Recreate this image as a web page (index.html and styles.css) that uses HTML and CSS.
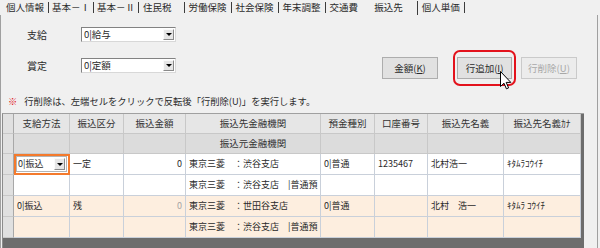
FILE: index.html
```html
<!DOCTYPE html>
<html lang="ja">
<head>
<meta charset="utf-8">
<title>振込先</title>
<link rel="stylesheet" href="styles.css">
</head>
<body>
<div class="tabs">
  <span class="tab">個人情報</span>
  <span class="tab tab-roman">基本－Ⅰ</span>
  <span class="tab tab-roman">基本－Ⅱ</span>
  <span class="tab tab-wide">住民税</span>
  <span class="tab">労働保険</span>
  <span class="tab">社会保険</span>
  <span class="tab">年末調整</span>
  <span class="tab tab-plain">交通費</span>
  <span class="tab tab-active">振込先</span>
  <span class="tab">個人単価</span>
</div>
<div class="panel">
  <div class="top">
    <div class="fields">
      <span class="label">支給</span>
      <div class="select"><span class="select-text">0|給与</span><span class="select-btn"><i class="tri"></i></span></div>
      <span class="label">賞定</span>
      <div class="select"><span class="select-text">0|定額</span><span class="select-btn"><i class="tri"></i></span></div>
    </div>
    <div class="actions">
      <button class="btn">金額(<u>K</u>)</button>
      <span class="btn-wrap">
        <button class="btn">行追加(<u>I</u>)</button>
        <span class="ring"></span>
        <svg class="cursor" width="12" height="19" viewBox="0 0 12 19"><path d="M0.5 0.5 V15.5 L4 12.2 L6.4 17.8 L8.6 16.9 L6.2 11.4 H10.8 Z" fill="#fff" stroke="#000" stroke-width="1" stroke-linejoin="round"/></svg>
      </span>
      <button class="btn btn-disabled">行削除(<u>U</u>)</button>
    </div>
  </div>
  <div class="note"><span class="mark">※</span>行削除は、左端セルをクリックで反転後「行削除(U)」を実行します。</div>
  <div class="grid">
    <div class="row head1">
      <div class="cell rh"></div>
      <div class="cell c">支給方法</div>
      <div class="cell c">振込区分</div>
      <div class="cell c">振込金額</div>
      <div class="cell c">振込先金融機関</div>
      <div class="cell c">預金種別</div>
      <div class="cell c">口座番号</div>
      <div class="cell c">振込先名義</div>
      <div class="cell c">振込先名義ｶﾅ</div>
    </div>
    <div class="row head2">
      <div class="cell rh"></div>
      <div class="cell"></div>
      <div class="cell"></div>
      <div class="cell"></div>
      <div class="cell c">振込元金融機関</div>
      <div class="cell"></div>
      <div class="cell"></div>
      <div class="cell"></div>
      <div class="cell"></div>
    </div>
    <div class="row data">
      <div class="cell rh"></div>
      <div class="cell combo-cell"><div class="combo"><span class="combo-text">0|振込</span><span class="select-btn combo-btn"><i class="tri"></i></span></div></div>
      <div class="cell">一定</div>
      <div class="cell r">0</div>
      <div class="cell">東京三菱　：渋谷支店</div>
      <div class="cell">0|普通</div>
      <div class="cell">1235467</div>
      <div class="cell">北村浩一</div>
      <div class="cell">ｷﾀﾑﾗｺｳｲﾁ</div>
    </div>
    <div class="row data">
      <div class="cell rh"></div>
      <div class="cell"></div>
      <div class="cell"></div>
      <div class="cell"></div>
      <div class="cell">東京三菱　：渋谷支店　|普通預</div>
      <div class="cell"></div>
      <div class="cell"></div>
      <div class="cell"></div>
      <div class="cell"></div>
    </div>
    <div class="row data alt">
      <div class="cell rh"></div>
      <div class="cell">0|振込</div>
      <div class="cell">残</div>
      <div class="cell r faint">0</div>
      <div class="cell">東京三菱　：世田谷支店</div>
      <div class="cell">0|普通</div>
      <div class="cell"></div>
      <div class="cell">北村　浩一</div>
      <div class="cell">ｷﾀﾑﾗ ｺｳｲﾁ</div>
    </div>
    <div class="row data alt">
      <div class="cell rh"></div>
      <div class="cell"></div>
      <div class="cell"></div>
      <div class="cell"></div>
      <div class="cell">東京三菱　：渋谷支店　|普通預</div>
      <div class="cell"></div>
      <div class="cell"></div>
      <div class="cell"></div>
      <div class="cell"></div>
    </div>
  </div>
</div>
</body>
</html>
```
FILE: styles.css
```css
* { box-sizing: border-box; }
body {
  margin: 0;
  width: 600px;
  height: 248px;
  overflow: hidden;
  background: #f0f0f0;
  font-family: "Noto Sans CJK JP", sans-serif;
  font-size: 9.5px;
  color: #2a2a2a;
}

/* tabs */
.tabs {
  display: flex;
  align-items: flex-start;
  height: 15px;
  padding-left: 2px;
}
.tab {
  margin-top: 2px;
  height: 11px;
  line-height: 11px;
  padding: 0 4px;
  border-right: 1px solid #3c3c3c;
  white-space: nowrap;
}
.tab-roman { padding: 0 3px; }
.tab-wide { padding: 0 12px 0 4px; }
.tab-plain { border-right: none; }
.tab-active {
  padding: 0 14px 0 12px;
  margin-top: 1px;
  height: 14px;
  line-height: 13px;
}

/* panel */
.panel {
  width: 598px;
  height: 233px;
  border-left: 1px solid #a0a0a0;
  border-right: 1px solid #a0a0a0;
}
.top {
  display: flex;
  height: 76px;
}
.fields {
  display: grid;
  grid-template-columns: 54px 95px;
  grid-auto-rows: 15px;
  row-gap: 16px;
  align-items: center;
  padding: 12px 0 0 26px;
}
.label { line-height: 15px; font-size: 10px; }
.select {
  display: flex;
  height: 15px;
  background: #fff;
  border: 1px solid;
  border-color: #828282 #d8d8d8 #d8d8d8 #828282;
}
.select-text {
  flex: 1;
  padding-left: 2px;
  line-height: 13px;
}
.select-btn {
  width: 11px;
  margin: 1px;
  background: #e6e6e6;
  border: 1px solid;
  border-color: #fafafa #8a8a8a #8a8a8a #fafafa;
  display: flex;
  align-items: center;
  justify-content: center;
}
.tri {
  width: 0;
  height: 0;
  border-left: 3px solid transparent;
  border-right: 3px solid transparent;
  border-top: 3px solid #000;
}

.actions {
  display: flex;
  align-items: flex-start;
  margin-left: auto;
  margin-right: 20px;
  padding-top: 42px;
}
.btn {
  width: 56px;
  height: 22px;
  padding: 0;
  border: 1px solid #adadad;
  background: #e1e1e1;
  font-family: inherit;
  font-size: 9.5px;
  color: #2a2a2a;
}
.btn-wrap {
  position: relative;
  margin: 0 9px 0 19px;
  display: flex;
}
.btn-wrap .btn { width: 55px; }
.btn-disabled {
  color: #a8a8a8;
  background: #ececec;
  border-color: #cacaca;
}
.ring {
  position: absolute;
  left: -4px;
  top: -7px;
  width: 63px;
  height: 36px;
  border: 2.5px solid #e3121c;
  border-radius: 7px;
}
.cursor {
  position: absolute;
  left: 43px;
  top: 14px;
}

/* note */
.note {
  margin: 4px 0 0 7px;
  height: 12px;
  line-height: 12px;
  font-size: 9.3px;
  white-space: nowrap;
}
.mark {
  color: #e0141e;
  margin-right: 7px;
}

/* grid */
.grid {
  margin: 6px 0 0 1px;
  width: 582px;
  height: 140px;
  background: #6d6d6d;
  border-top: 1px solid #a0a0a0;
  border-left: 1px solid #8c8c8c;
  overflow: hidden;
}
.row {
  display: grid;
  grid-template-columns: 11px 56px 54px 62px 135px 54px 53px 76px 77px;
  height: 21px;
}
.cell {
  overflow: hidden;
  white-space: nowrap;
  padding: 0 3px;
  line-height: 20px;
  border-right: 1px solid #c9d0da;
  border-bottom: 1px solid #c9d0da;
  background: #fff;
}
.data .cell { font-size: 9px; }
.c { text-align: center; }
.r { text-align: right; }
.faint { color: #a5a5a5; }
.head1 { height: 20px; }
.head1 .cell {
  line-height: 19px;
  background: #e6e6e6;
  border-color: #c8c8c8;
  color: #333;
}
.head2 { height: 20px; }
.head2 .cell {
  line-height: 19px;
  background: #dcdcdc;
  border-color: #c8c8c8;
  color: #333;
}
.cell.rh {
  padding: 0;
  background: #e0e0e0;
  border-right-color: #a8a8a8;
  border-bottom-color: #c8c8c8;
}
.alt .cell { background: #fdeedf; }
.alt .cell.rh { background: #e0e0e0; }
.combo-cell {
  padding: 2px;
  outline: 2px solid #f47a2c;
  outline-offset: -2px;
}
.combo {
  display: flex;
  height: 16px;
  background: #fff;
  border: 1px solid #b4b4b4;
}
.combo-text {
  flex: 1;
  line-height: 14px;
  padding-left: 1px;
}
.combo-btn { width: 11px; }
```
